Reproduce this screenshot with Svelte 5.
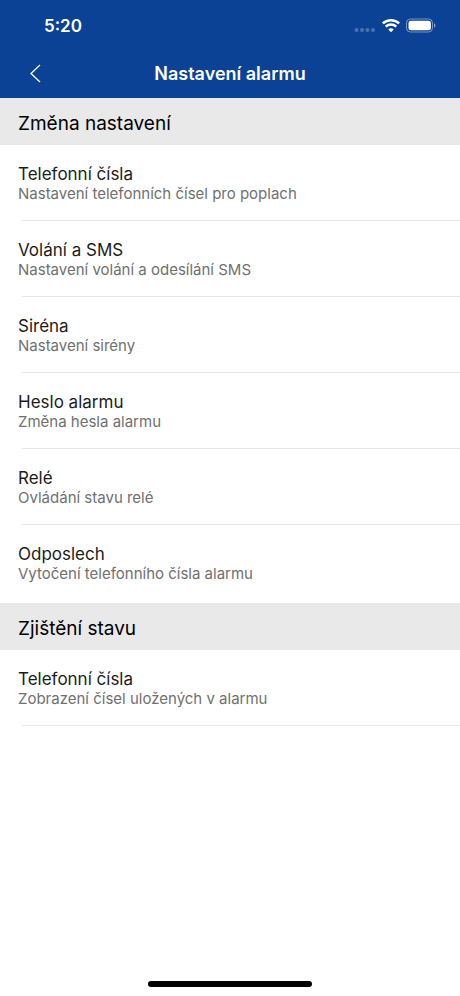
<script>
  const sections = [
    {
      heading: 'Změna nastavení',
      items: [
        { title: 'Telefonní čísla', detail: 'Nastavení telefonních čísel pro poplach' },
        { title: 'Volání a SMS', detail: 'Nastavení volání a odesílání SMS' },
        { title: 'Siréna', detail: 'Nastavení sirény' },
        { title: 'Heslo alarmu', detail: 'Změna hesla alarmu' },
        { title: 'Relé', detail: 'Ovládání stavu relé' },
        { title: 'Odposlech', detail: 'Vytočení telefonního čísla alarmu' },
      ],
    },
    {
      heading: 'Zjištění stavu',
      items: [{ title: 'Telefonní čísla', detail: 'Zobrazení čísel uložených v alarmu' }],
    },
  ];
</script>

<div class="screen">
  <header>
    <div class="status">
      <span class="time">5:20</span>
      <svg width="82" height="20" viewBox="0 0 82 20" aria-hidden="true">
        <g fill="#fff" fill-opacity=".25">
          <circle cx="2.5" cy="14" r="2" />
          <circle cx="8" cy="14" r="2" />
          <circle cx="13.5" cy="14" r="2" />
          <circle cx="19" cy="14" r="2" />
        </g>
        <g fill="none" stroke="#fff" stroke-width="2.5">
          <path d="M28.8 7.4a12 12 0 0 1 16.4 0" />
          <path d="M31.7 10.6a7.8 7.8 0 0 1 10.6 0" />
        </g>
        <path d="M37 16.2l-2.7-2.7a3.9 3.9 0 0 1 5.4 0z" fill="#fff" />
        <rect x="52.5" y="3" width="26" height="13" rx="4" fill="none" stroke="#fff" stroke-opacity=".45" />
        <rect x="54.5" y="4.7" width="22.4" height="9.6" rx="2.4" fill="#fff" />
        <path d="M80 7.3c1.9.7 1.9 3.7 0 4.4z" fill="#fff" fill-opacity=".5" />
      </svg>
    </div>
    <nav>
      <button class="back" type="button" aria-label="Zpět">
        <svg width="12" height="20" viewBox="0 0 12 20" aria-hidden="true">
          <path d="M10 1L1 9.5l9 8.5" fill="none" stroke="#fff" stroke-width="1.3" />
        </svg>
      </button>
      <h1>Nastavení alarmu</h1>
    </nav>
  </header>

  <main>
    {#each sections as section}
      <section>
        <h2>{section.heading}</h2>
        <ul>
          {#each section.items as item}
            <li>
              <button class="row" type="button">
                <span class="title">{item.title}</span>
                <span class="detail">{item.detail}</span>
              </button>
            </li>
          {/each}
        </ul>
      </section>
    {/each}
  </main>

  <footer><div class="home"></div></footer>
</div>

<style>
  :global(body) {
    margin: 0;
    background: #fff;
  }
  .screen {
    display: flex;
    flex-direction: column;
    min-height: 100vh;
    font-family: Inter, 'Liberation Sans', sans-serif;
    color: #1c1c1c;
  }
  button {
    margin: 0;
    border: 0;
    background: none;
    font: inherit;
    color: inherit;
    cursor: pointer;
  }
  header {
    background: #0b4295;
    color: #fff;
  }
  .status {
    display: flex;
    align-items: center;
    justify-content: space-between;
    padding: 14px 24px 12px 44px;
  }
  .time {
    font-size: 17px;
    font-weight: 600;
    line-height: 24px;
  }
  nav {
    display: grid;
    grid-template-columns: 72px 1fr 72px;
    align-items: center;
  }
  .back {
    display: flex;
    align-items: center;
    height: 48px;
    padding: 0 30px;
  }
  h1 {
    margin: 0;
    font-size: 18px;
    font-weight: 600;
    line-height: 24px;
    text-align: center;
  }
  main {
    flex: 1;
  }
  h2 {
    margin: 0;
    padding: 14px 18px 9px;
    background: #e9e9e9;
    color: #000;
    font-size: 19px;
    font-weight: 400;
    line-height: 24px;
  }
  ul {
    margin: 0;
    padding: 0 0 2px;
    list-style: none;
  }
  li::after {
    content: '';
    display: block;
    height: 1px;
    margin-left: 22px;
    background: #e6e6e6;
  }
  section:not(:last-child) li:last-child::after {
    background: none;
  }
  .row {
    display: flex;
    flex-direction: column;
    width: 100%;
    padding: 19px 18px 16px;
    text-align: left;
  }
  .title {
    font-size: 17px;
    line-height: 20px;
  }
  .detail {
    color: #707070;
    font-size: 15px;
    line-height: 20px;
  }
  footer {
    display: flex;
    justify-content: center;
    padding: 9px 0;
  }
  .home {
    width: 164px;
    height: 6px;
    border-radius: 3px;
    background: #000;
  }
</style>
